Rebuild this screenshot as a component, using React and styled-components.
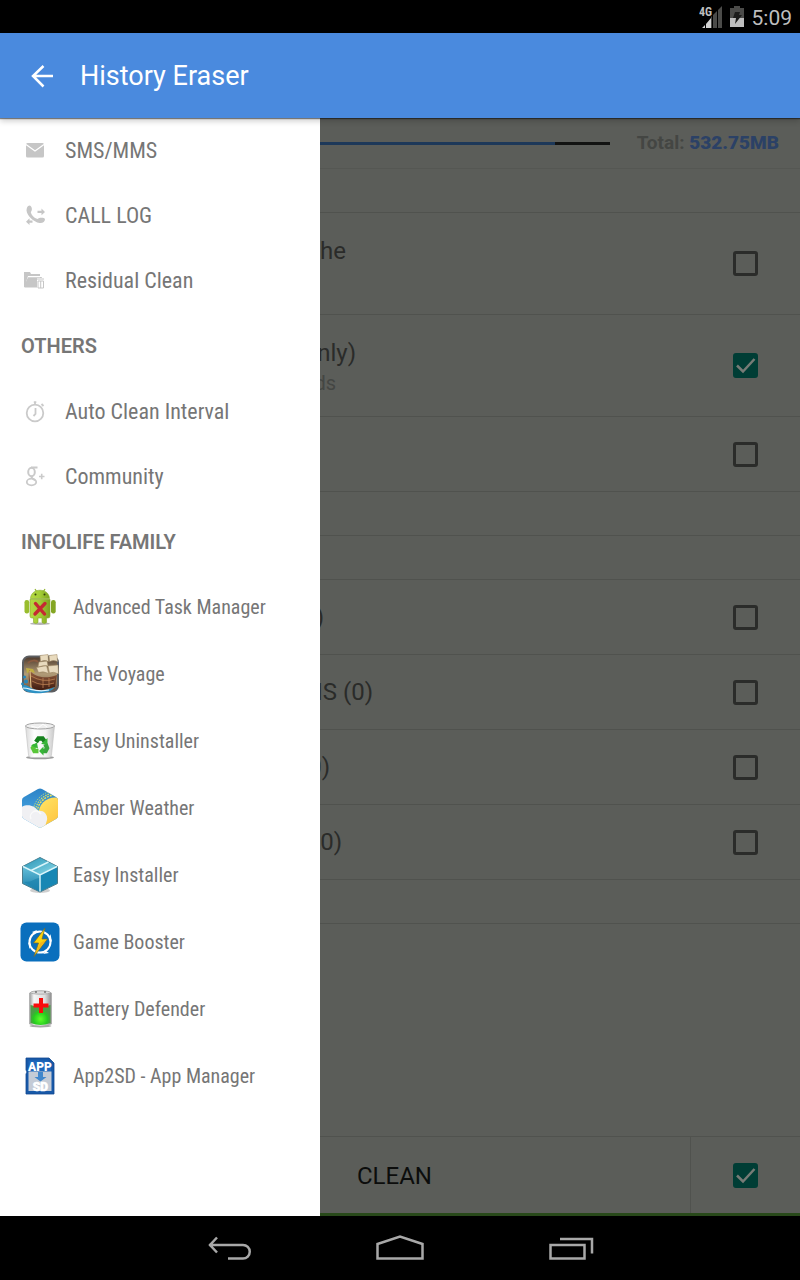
import React from 'react';
import styled, { createGlobalStyle, css } from 'styled-components';

const GlobalStyle = createGlobalStyle`
  *, *::before, *::after { box-sizing: border-box; }
  body { margin: 0; background: #000; font-family: Roboto, "Liberation Sans", sans-serif; }
  button { font: inherit; color: inherit; background: none; border: 0; padding: 0; cursor: pointer; }
  svg { display: block; flex: none; }
`;

const Screen = styled.div`
  display: flex;
  flex-direction: column;
  min-height: 100vh;
`;

const StatusBar = styled.div`
  display: flex;
  align-items: center;
  justify-content: flex-end;
  gap: 7px;
  height: 33px;
  padding: 0 8px;
  background: #000;
  color: #bebebe;
`;

const Clock = styled.time`
  font-size: 21px;
  line-height: 32px;
  padding-top: 2px;
`;

const AppBar = styled.header`
  display: flex;
  align-items: center;
  height: 85px;
  padding: 1px 28px 0;
  gap: 24px;
  background: #4a8ade;
  color: #fff;
  position: relative;
  box-shadow: 0 1px 1px rgba(0, 0, 0, 0.45), 0 3px 6px rgba(0, 0, 0, 0.2);
`;

const BackButton = styled.button`
  display: grid;
  place-items: center;
  width: 28px;
  height: 40px;
`;

const Title = styled.h1`
  margin: 0;
  font-size: 27px;
  line-height: 36px;
  font-weight: 400;
`;

const Body = styled.div`
  display: flex;
  flex: 1;
`;

const Drawer = styled.nav`
  flex: none;
  width: 320px;
  background: #fff;
  color: #767676;
`;

const SectionTitle = styled.h2`
  display: flex;
  align-items: center;
  height: 66px;
  margin: 0;
  padding: 0 21px;
  font-size: 20px;
  line-height: 24px;
  font-weight: 600;
`;

const List = styled.ul`
  list-style: none;
  margin: 0;
  padding: 0;
`;

const DrawerLink = styled.a`
  display: flex;
  align-items: center;
  color: inherit;
  text-decoration: none;
  white-space: nowrap;
  font-family: "Roboto Condensed", Roboto, "Liberation Sans", sans-serif;
  ${(p) =>
    p.$app
      ? css`height: 67px; padding: 0 20px 3px; gap: 13px; font-size: 20px; line-height: 28px;`
      : css`height: 65px; padding: 0 23px; gap: 18px; font-size: 22px; line-height: 32px;`}
`;

const Content = styled.main`
  display: flex;
  flex-direction: column;
  flex: 1;
  min-width: 0;
  background: #5b5d59;
  color: #2a2b29;
`;

const Summary = styled.div`
  display: flex;
  align-items: center;
  gap: 27px;
  height: 51px;
  padding-right: 21px;
  border-bottom: 1px solid #555753;
  font-size: 19px;
  line-height: 24px;
  font-weight: 700;
  color: #444643;
`;

const Track = styled.div`
  flex: 1;
  height: 3px;
  background: #121312;
`;

const Used = styled.div`
  height: 3px;
  background: #1d3859;
`;

const Amount = styled.strong`
  color: #2b4166;
`;

const Row = styled.div`
  display: flex;
  align-items: center;
  justify-content: space-between;
  height: ${(p) => p.$height}px;
  padding-right: 42px;
  border-bottom: 1px solid #50524e;
`;

const Label = styled.label`
  display: block;
`;

const Tail = styled.span`
  display: flex;
  justify-content: flex-end;
  overflow: hidden;
  white-space: nowrap;
  width: ${(p) => p.$reach}px;
  ${(p) =>
    p.$sub
      ? css`height: 26px; font-size: 20px; line-height: 26px; color: #444643;`
      : css`height: 34px; font-size: 24px; line-height: 34px;`}
`;

const Tick = styled.span`
  display: grid;
  flex: none;
  width: 25px;
  height: 25px;
  & > * { grid-area: 1 / 1; }
  & > svg { pointer-events: none; }
`;

const TickInput = styled.input`
  appearance: none;
  width: 25px;
  height: 25px;
  margin: 0;
  border: 3px solid #2b2c2a;
  border-radius: 3px;
  &:checked { background: #003d35; border-color: #003d35; }
`;

const ActionBar = styled.div`
  display: flex;
  height: 80px;
  margin-top: auto;
  border-top: 1px solid #50524e;
  border-bottom: 3px solid #28491a;
`;

const CleanButton = styled.button`
  flex: 1;
  && { padding: 2px 37px 0; }
  text-align: left;
  font-size: 24px;
  line-height: 32px;
  color: #0c0d0c;
`;

const SelectAll = styled.div`
  display: flex;
  align-items: center;
  justify-content: flex-end;
  width: 110px;
  padding-right: 42px;
  border-left: 1px solid #50524e;
`;

const NavBar = styled.div`
  display: flex;
  justify-content: center;
  height: 64px;
  padding-top: 2px;
  background: #000;
`;

const NavButton = styled.button`
  display: grid;
  place-items: center;
  width: 171px;
  height: 62px;
`;

/* Status bar and navigation icons */

const Signal = () => (
  <svg width="24" height="24" viewBox="0 0 24 24" aria-hidden="true">
    <path d="M23 1v22h-4V5zM18 6v17h-4V10zM13 11v12h-1V12z" fill="#4b4b49" />
    <path d="M3 23l3-3v3zM7 19l5-6v10H7z" fill="#d2d2d2" />
    <text x="0" y="11" fontFamily="Roboto Condensed, Roboto, sans-serif" fontSize="12" fontWeight="700" fill="#bebebe">4G</text>
  </svg>
);

const BatteryStatus = () => (
  <svg width="15" height="24" viewBox="0 0 15 24" aria-hidden="true">
    <path d="M4 1h6v2h4v10H0V3h4z" fill="#4b4b49" />
    <path d="M0 13h14v9H0z" fill="#bebebe" />
    <path d="M5 7h5l-1 3h3L5 19l1-6H3z" fill="#1c1c1b" />
  </svg>
);

const ArrowLeft = () => (
  <svg width="28" height="28" viewBox="0 0 28 28" fill="none" stroke="#fff" strokeWidth="2.500" aria-hidden="true">
    <path d="M25 14H5M15.500 4L5 14l10.500 10.500" />
  </svg>
);

const NavBack = () => (
  <svg width="46" height="28" viewBox="0 0 46 28" fill="none" stroke="#a8a8a8" strokeWidth="2.500" aria-hidden="true">
    <path d="M3 10h34a6.500 6.500 0 0 1 0 13.500H22M11 2.500L4 10l7 7.500" />
  </svg>
);

const NavHome = () => (
  <svg width="50" height="28" viewBox="0 0 50 28" fill="none" stroke="#a8a8a8" strokeWidth="2.500" aria-hidden="true">
    <path d="M2.500 9L25 1.500 47.500 9v14.500h-45z" />
  </svg>
);

const NavRecent = () => (
  <svg width="46" height="28" viewBox="0 0 46 28" fill="none" stroke="#a8a8a8" strokeWidth="2.500" aria-hidden="true">
    <path d="M2.500 10h34v13.500h-34zM12 4h32v14.500" />
  </svg>
);

/* Drawer icons */

const Mail = () => (
  <svg width="24" height="24" viewBox="0 0 24 24" aria-hidden="true">
    <rect x="3" y="4" width="18" height="14.500" rx="1.500" fill="#c6c6c6" />
    <path d="M3 5.500l9 6.500 9-6.500" fill="none" stroke="#fff" strokeWidth="1.300" />
  </svg>
);

const CallLog = () => (
  <svg width="24" height="24" viewBox="0 0 24 24" fill="#c6c6c6" aria-hidden="true">
    <path d="M6.500 1.500C9 2 9.800 6 7.800 8c.4 3 3.500 6 6.700 7 2-2 7-1.500 7.500 0 0 3-2.500 4.500-5.500 4C10.500 18 4 11.500 3.500 6.500c0-2.500 1-5 3-5z" />
    <path d="M14.500 6.800h4V4.500L22 8l-3.500 3.300V9h-4zM9.500 16.500h-3V14.300L3 17.700 6.500 21v-2.300h3z" />
  </svg>
);

const FolderTrash = () => (
  <svg width="24" height="24" viewBox="0 0 24 24" aria-hidden="true">
    <path d="M1 3h6l1 2h9v2H5L3 13V18H1z" fill="#c6c6c6" />
    <path d="M5 8.300h12L15.500 10l-1 8.500H1.500V16z" fill="#c6c6c6" />
    <path d="M14 10h7M16.300 8.500h2.500M15 12h5.500v7H15zM17 12v7M19 12v7" stroke="#fff" strokeWidth="2" fill="none" />
    <path d="M14 10h7M16.300 8.500h2.500M15 12h5.500v7H15zM17.700 12v7" stroke="#c6c6c6" fill="none" />
  </svg>
);

const Stopwatch = () => (
  <svg width="24" height="24" viewBox="0 0 24 24" fill="none" stroke="#cacaca" strokeWidth="1.800" aria-hidden="true">
    <circle cx="12" cy="13" r="8.300" />
    <path d="M12 1.500v3M10.800 2.200h2.500M18.500 4l2 2M12.500 8v6l-2 2" />
  </svg>
);

const GooglePlus = () => (
  <svg width="24" height="24" viewBox="0 0 24 24" fill="none" stroke="#cacaca" aria-hidden="true">
    <ellipse cx="8.500" cy="7" rx="3.300" ry="4.200" strokeWidth="2" />
    <path d="M8 2.500h6.500M9.500 11c-2.500 2 .5 2.500 2.500 4.500" strokeWidth="1.800" />
    <ellipse cx="8.500" cy="17" rx="4.700" ry="3.300" strokeWidth="1.800" />
    <path d="M16 11.500h5.500M18.700 8.800v5.500" strokeWidth="1.600" />
  </svg>
);

/* Application logos */

const TaskManagerLogo = () => (
  <svg width="40" height="40" viewBox="0 0 40 40" aria-hidden="true">
    <defs>
      <linearGradient id="droid" x2="1"><stop stopColor="#b5d942" /><stop offset=".5" stopColor="#a4ce37" /><stop offset="1" stopColor="#7da21f" /></linearGradient>
    </defs>
    <ellipse cx="20" cy="36.700" rx="10" ry="1.200" fill="#b4b4b4" />
    <path d="M15 2l2.500 4M25 2l-2.500 4" stroke="#92b52c" strokeWidth="1.200" />
    <path d="M10.500 11.500C11 .5 29 .5 29.500 11.500z" fill="url(#droid)" stroke="#87a928" strokeWidth=".6" />
    <circle cx="15.500" cy="7.500" r="1" fill="#35430c" /><circle cx="24.500" cy="7.500" r="1" fill="#35430c" />
    <rect x="4.500" y="13" width="4.700" height="13.500" rx="2.200" fill="#99bd2d" />
    <rect x="31" y="13" width="4.700" height="13.500" rx="2.200" fill="#84a623" />
    <path d="M10 12.300h20V29q0 2-2 2h-1.500v4.500q-2 2-4.500 0V31h-4v4.500q-2 2-4.500 0V31H12q-2 0-2-2z" fill="url(#droid)" stroke="#87a928" strokeWidth=".6" />
    <path d="M15.500 16.500l9 10.500M25 16.500L15 27" stroke="#c52a32" strokeWidth="3.400" strokeLinecap="round" />
  </svg>
);

const VoyageLogo = () => (
  <svg width="40" height="40" viewBox="0 0 40 40" aria-hidden="true">
    <defs>
      <linearGradient id="sky" y2="1" x2="0"><stop stopColor="#4c382b" /><stop offset=".5" stopColor="#b19c77" /><stop offset="1" stopColor="#6b4b36" /></linearGradient>
      <linearGradient id="hull" y2="1" x2="0"><stop stopColor="#9a6342" /><stop offset="1" stopColor="#3b190e" /></linearGradient>
    </defs>
    <rect x="3" y="2.500" width="35" height="35" rx="6" fill="url(#sky)" stroke="#5c5e61" strokeWidth="2" />
    <path d="M20 1.500l8-1 .5 7q-4-2-8 0zM29 1.500l8-1 .5 7q-4-2-8 0zM19 8l8-1 1 5q-5-1-10 1zM16.500 13.500l10-2 2 8q-5-3-10-1zM28 12l10-1 .5 9q-5-3-9-1z" fill="#e8dabd" stroke="#9c8763" strokeWidth=".5" />
    <path d="M8 9c3-3 8-3 10-1" stroke="#8a5b40" strokeWidth="2" fill="none" />
    <path d="M6 14l7 1 2 4-4-1-4 1z" fill="#c0ae43" />
    <path d="M9 16c7 8 17 9 28 5l-2 12-17 4C9 34 8 26 9 16z" fill="url(#hull)" />
    <path d="M11 22q12 7 24 3M12 27q10 6 22 2M23 24v10M29 24v9" stroke="#bd8253" strokeWidth=".8" fill="none" />
    <path d="M10 17l1 17" stroke="#dfbd83" strokeWidth="1.200" />
    <path d="M2 32c4-3 7 1 11 3s13 2 22-2c-4 6-15 7-22 6S3 36 2 32z" fill="#2c91c4" />
    <path d="M3 34c8 0 12 5 26 2" stroke="#e7f7ff" strokeWidth="1.200" fill="none" />
    <circle cx="4.500" cy="23" r="1.600" fill="#2587bb" /><circle cx="6" cy="27.500" r="2" fill="#2587bb" /><circle cx="2.500" cy="30" r="1.400" fill="#2587bb" />
  </svg>
);

const UninstallerLogo = () => (
  <svg width="40" height="40" viewBox="0 0 40 40" aria-hidden="true">
    <defs>
      <linearGradient id="bin" x2="1"><stop stopColor="#d9d9d9" /><stop offset=".3" stopColor="#fff" /><stop offset=".7" stopColor="#f2f2f2" /><stop offset="1" stopColor="#c9c9c9" /></linearGradient>
    </defs>
    <ellipse cx="20" cy="36.500" rx="14" ry="1.800" fill="#9c9c9c" />
    <path d="M5.500 5l3 29q.3 2.500 3 2.500h17q2.700 0 3-2.500l3-29z" fill="url(#bin)" stroke="#c1c1c1" strokeWidth=".6" />
    <ellipse cx="20" cy="5" rx="14.500" ry="3" fill="#efefef" stroke="#a3a3a3" />
    <path d="M11 5l7 2 5-4 4 3" stroke="#fff" fill="none" />
    <g fill="none" strokeWidth="4.500">
      <path d="M16 21l2.500-3.500h4L25 21" stroke="#16811e" />
      <path d="M25.500 23l1.500 4-1.500 3H22" stroke="#39a63c" />
      <path d="M18.500 30h-4L13 27l2-3" stroke="#59c638" />
    </g>
    <path d="M21 23l6.500.500V17zM23.500 25.500v9L19 30zM11 24.500l6-3 1 6z" fill="#37b637" />
  </svg>
);

const WeatherLogo = () => (
  <svg width="40" height="40" viewBox="0 0 40 40" aria-hidden="true">
    <defs>
      <clipPath id="hex"><path d="M18 1q2-1 4 0l14 8q2 1 2 3v16q0 2-2 3l-14 8q-2 1-4 0L4 31q-2-1-2-3V12q0-2 2-3z" /></clipPath>
      <linearGradient id="sun" x2="1" y2="1"><stop stopColor="#ffe666" /><stop offset="1" stopColor="#ffb52e" /></linearGradient>
      <linearGradient id="blue" x2="0" y2="1"><stop stopColor="#2c83c6" /><stop offset="1" stopColor="#4fb0ec" /></linearGradient>
    </defs>
    <g clipPath="url(#hex)">
      <path d="M0 0h40v40H0z" fill="url(#blue)" />
      <circle cx="35" cy="25" r="22" fill="none" stroke="#c3d97a" strokeWidth="1" strokeDasharray="1.500 1" />
      <circle cx="35" cy="25" r="19.800" fill="none" stroke="#d7df68" strokeWidth="1.200" strokeDasharray="1.500 1" />
      <circle cx="35" cy="25" r="17.800" fill="none" stroke="#e7df58" strokeWidth="1.400" strokeDasharray="2 1" />
      <circle cx="35" cy="26" r="16.500" fill="url(#sun)" />
      <path d="M0 20c6-5 15-3 18 3 6-1 10 4 9 9l-3 10H0z" fill="#f0f0f3" />
      <path d="M11 31c-3-5 5-12 10-5" fill="none" stroke="#fafafa" strokeWidth="1.500" />
    </g>
  </svg>
);

const InstallerLogo = () => (
  <svg width="40" height="40" viewBox="0 0 40 40" aria-hidden="true">
    <defs>
      <linearGradient id="boxTop" x2="1" y2="1"><stop stopColor="#2793b5" /><stop offset="1" stopColor="#8fdcea" /></linearGradient>
      <linearGradient id="boxLeft" x2="0" y2="1"><stop stopColor="#65bfd9" /><stop offset="1" stopColor="#177ca9" /></linearGradient>
    </defs>
    <ellipse cx="20" cy="35.500" rx="10" ry="2.500" fill="#cfcfcf" />
    <path d="M20 2.500l17.500 9v17L20 37 2.500 28.500v-17z" fill="#1787b4" stroke="#4d7e8d" />
    <path d="M20 3l17 8.500L20 20 3 11.500z" fill="url(#boxTop)" />
    <path d="M3 11.500L20 20v16.500L3 28z" fill="url(#boxLeft)" />
    <path d="M4 27C14 27 14 23 20 23v13z" fill="#1c83ae" opacity=".7" />
    <path d="M3 11.500L20 20l17-8.500M20 20v16.500M11 15.500L28.500 7" fill="none" stroke="#d9f5fa" strokeWidth="1.400" />
  </svg>
);

const BoosterLogo = () => (
  <svg width="40" height="40" viewBox="0 0 40 40" aria-hidden="true">
    <rect x=".5" y=".5" width="39" height="39" rx="6" fill="#0a6fbd" />
    <circle cx="20" cy="20" r="10.500" fill="none" stroke="#fff" strokeWidth="2" />
    <path d="M9.500 27L8 20l3 3zM30.500 12l1.500 8-3-3zM12 10l5-2-2 4zM29 31l-6 1 3-3z" fill="#fff" />
    <path d="M25 6L13.500 21h5L14 34.500 27.500 17H22z" fill="#fdd30d" stroke="#6f6930" strokeWidth=".7" />
    <path d="M26.500 17.500L15 32l5-11z" fill="#f3b51a" />
  </svg>
);

const BatteryLogo = () => (
  <svg width="40" height="40" viewBox="0 0 40 40" aria-hidden="true">
    <defs>
      <linearGradient id="glass" x2="1"><stop stopColor="#999" /><stop offset=".2" stopColor="#f7f7f7" /><stop offset=".7" stopColor="#ddd" /><stop offset="1" stopColor="#8b8b8b" /></linearGradient>
      <radialGradient id="charge" cy=".7"><stop stopColor="#5eff28" /><stop offset=".7" stopColor="#26cb20" /><stop offset="1" stopColor="#4b9e44" /></radialGradient>
    </defs>
    <ellipse cx="20.500" cy="37" rx="11" ry="1.500" fill="#a7a7a7" />
    <path d="M9.500 4q11-4 22 0v31q-11 4-22 0z" fill="url(#glass)" stroke="#a3a3a3" strokeWidth=".6" />
    <path d="M10.500 16q10 3 20 0v18q-10 4-20 0z" fill="url(#charge)" />
    <ellipse cx="20.500" cy="3.500" rx="10" ry="1.700" fill="#ddd" stroke="#999" strokeWidth=".7" />
    <path d="M15 3h2M24 3h2" stroke="#444" />
    <path d="M19 9h4v5.500h5.500v4H23V24h-4v-5.500h-5.500v-4H19z" fill="#f90b0b" />
  </svg>
);

const SdLogo = () => (
  <svg width="40" height="40" viewBox="0 0 40 40" aria-hidden="true">
    <path d="M6 2h23l5 5v31H6V18l1-2-1-2z" fill="#1759a8" stroke="#12488f" strokeWidth=".8" />
    <path d="M8.500 4.500H28l3 4V24H8.500z" fill="#1f68bb" />
    <path d="M8.500 15.500h23v19.500h-23z" fill="#c4cbd6" />
    <path d="M18 16h5v5h3.500L20.500 25.500 14.500 21H18z" fill="#4187cc" />
    <text x="20" y="14.500" textAnchor="middle" fontFamily="Roboto, sans-serif" fontSize="12" fontWeight="900" fill="#fff">APP</text>
    <text x="20.500" y="34.500" textAnchor="middle" fontFamily="Roboto, sans-serif" fontSize="12" fontWeight="900" fill="#fff" stroke="#fff" strokeWidth=".6">SD</text>
  </svg>
);

const cleaners = [
  { label: 'SMS/MMS', Icon: Mail },
  { label: 'CALL LOG', Icon: CallLog },
  { label: 'Residual Clean', Icon: FolderTrash },
];

const others = [
  { label: 'Auto Clean Interval', Icon: Stopwatch },
  { label: 'Community', Icon: GooglePlus },
];

const family = [
  { label: 'Advanced Task Manager', Icon: TaskManagerLogo },
  { label: 'The Voyage', Icon: VoyageLogo },
  { label: 'Easy Uninstaller', Icon: UninstallerLogo },
  { label: 'Amber Weather', Icon: WeatherLogo },
  { label: 'Easy Installer', Icon: InstallerLogo },
  { label: 'Game Booster', Icon: BoosterLogo },
  { label: 'Battery Defender', Icon: BatteryLogo },
  { label: 'App2SD - App Manager', Icon: SdLogo },
];

/* reach: how far the end of a row's label shows past the open drawer */
const rows = [
  { height: 44 },
  { height: 102, text: 'he', reach: 26, sub: '', subReach: 0, tick: true },
  { height: 102, text: 'nly)', reach: 36, sub: 'ds', subReach: 16, tick: true, checked: true },
  { height: 75, tick: true },
  { height: 44 },
  { height: 44 },
  { height: 75, text: ')', reach: 4, tick: true },
  { height: 75, text: 'MS (0)', reach: 53, tick: true },
  { height: 75, text: '0)', reach: 10, tick: true },
  { height: 75, text: '0)', reach: 22, tick: true },
  { height: 44 },
];

function CheckBox({ id, checked, label }) {
  return (
    <Tick>
      <TickInput type="checkbox" id={id} defaultChecked={checked} aria-label={label} />
      {checked && (
        <svg width="25" height="25" viewBox="0 0 25 25" fill="none" stroke="#777b76" strokeWidth="2.500" aria-hidden="true">
          <path d="M4 12.500l6 6L21.500 6" />
        </svg>
      )}
    </Tick>
  );
}

function Links({ items, app }) {
  return (
    <List>
      {items.map(({ label, Icon }) => (
        <li key={label}>
          <DrawerLink href="#" $app={app}>
            <Icon />
            <span>{label}</span>
          </DrawerLink>
        </li>
      ))}
    </List>
  );
}

export default function App() {
  return (
    <Screen>
      <GlobalStyle />
      <StatusBar>
        <Signal />
        <BatteryStatus />
        <Clock>5:09</Clock>
      </StatusBar>
      <AppBar>
        <BackButton aria-label="Back"><ArrowLeft /></BackButton>
        <Title>History Eraser</Title>
      </AppBar>
      <Body>
        <Drawer>
          <Links items={cleaners} />
          <SectionTitle>OTHERS</SectionTitle>
          <Links items={others} />
          <SectionTitle>INFOLIFE FAMILY</SectionTitle>
          <Links items={family} app />
        </Drawer>
        <Content>
          <Summary>
            <Track><Used style={{ width: '81%' }} /></Track>
            <span>Total: <Amount>532.75MB</Amount></span>
          </Summary>
          {rows.map((row, i) => (
            <Row key={i} $height={row.height}>
              <Label htmlFor={row.tick ? `row-${i}` : undefined}>
                {row.text && <Tail $reach={row.reach}>{row.text}</Tail>}
                {row.sub !== undefined && <Tail $sub $reach={row.subReach}>{row.sub}</Tail>}
              </Label>
              {row.tick && <CheckBox id={`row-${i}`} checked={row.checked} />}
            </Row>
          ))}
          <ActionBar>
            <CleanButton>CLEAN</CleanButton>
            <SelectAll><CheckBox id="select-all" checked label="Select all" /></SelectAll>
          </ActionBar>
        </Content>
      </Body>
      <NavBar>
        <NavButton aria-label="Back"><NavBack /></NavButton>
        <NavButton aria-label="Home"><NavHome /></NavButton>
        <NavButton aria-label="Recent apps"><NavRecent /></NavButton>
      </NavBar>
    </Screen>
  );
}
